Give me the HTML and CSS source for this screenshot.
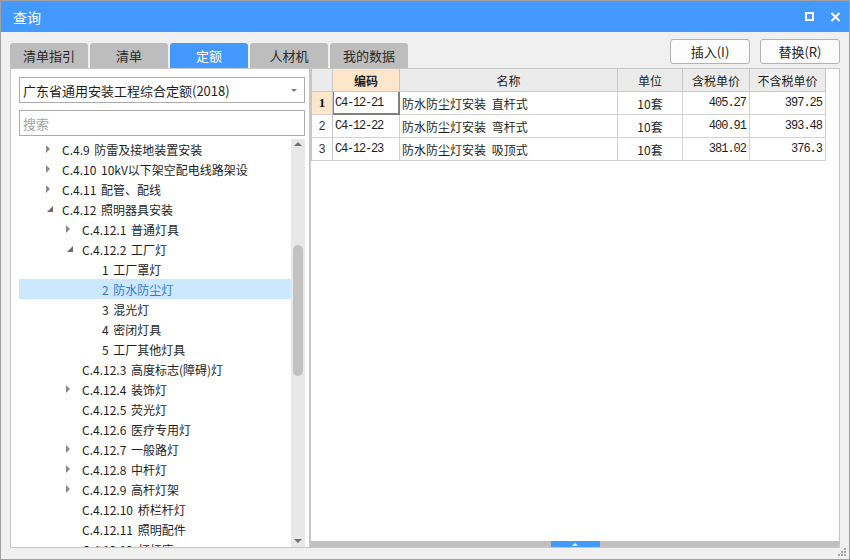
FILE: index.html
```html
<!DOCTYPE html>
<html lang="zh">
<head>
<meta charset="utf-8">
<title>查询</title>
<link rel="stylesheet" href="styles.css">
</head>
<body>
<div class="window">
  <div class="titlebar">
    <span class="title">查询</span>
    <div class="win-btns">
      <svg width="9" height="9" viewBox="0 0 9 9"><rect x="1" y="1" width="7" height="7" fill="none" stroke="#fff" stroke-width="2"/></svg>
      <svg width="11" height="10" viewBox="0 0 11 10"><path d="M1.5 1L9.5 9M9.5 1L1.5 9" stroke="#fff" stroke-width="2" fill="none"/></svg>
    </div>
  </div>

  <div class="toolbar">
    <div class="tabs">
      <div class="tab">清单指引</div>
      <div class="tab">清单</div>
      <div class="tab active">定额</div>
      <div class="tab">人材机</div>
      <div class="tab">我的数据</div>
    </div>
    <div class="actions">
      <div class="btn">插入(I)</div>
      <div class="btn">替换(R)</div>
    </div>
  </div>

  <div class="main">
    <div class="left">
      <div class="select">
        <span class="select-text">广东省通用安装工程综合定额(2018)</span>
        <svg class="caret" width="6" height="3" viewBox="0 0 6 3"><path d="M0 0H6L3 3Z" fill="#7a7a7a"/></svg>
      </div>
      <div class="search">搜索</div>
      <div class="tree-wrap">
        <div class="tree">
          <div class="row l1"><span class="tog"><svg width="5" height="8" viewBox="0 0 5 8"><path d="M0 0L4 4L0 8Z" fill="#8a8a8a"/></svg></span><span>C.4.9 防雷及接地装置安装</span></div>
          <div class="row l1"><span class="tog"><svg width="5" height="8" viewBox="0 0 5 8"><path d="M0 0L4 4L0 8Z" fill="#8a8a8a"/></svg></span><span>C.4.10 10kV以下架空配电线路架设</span></div>
          <div class="row l1"><span class="tog"><svg width="5" height="8" viewBox="0 0 5 8"><path d="M0 0L4 4L0 8Z" fill="#8a8a8a"/></svg></span><span>C.4.11 配管、配线</span></div>
          <div class="row l1"><span class="tog"><svg class="exp" width="6" height="6" viewBox="0 0 6 6"><path d="M6 0V6H0Z" fill="#6a6a6a"/></svg></span><span>C.4.12 照明器具安装</span></div>
          <div class="row l2"><span class="tog"><svg width="5" height="8" viewBox="0 0 5 8"><path d="M0 0L4 4L0 8Z" fill="#8a8a8a"/></svg></span><span>C.4.12.1 普通灯具</span></div>
          <div class="row l2"><span class="tog"><svg class="exp" width="6" height="6" viewBox="0 0 6 6"><path d="M6 0V6H0Z" fill="#6a6a6a"/></svg></span><span>C.4.12.2 工厂灯</span></div>
          <div class="row l3"><span class="tog"></span><span>1 工厂罩灯</span></div>
          <div class="row l3 sel"><span class="tog"></span><span>2 防水防尘灯</span></div>
          <div class="row l3"><span class="tog"></span><span>3 混光灯</span></div>
          <div class="row l3"><span class="tog"></span><span>4 密闭灯具</span></div>
          <div class="row l3"><span class="tog"></span><span>5 工厂其他灯具</span></div>
          <div class="row l2"><span class="tog"></span><span>C.4.12.3 高度标志(障碍)灯</span></div>
          <div class="row l2"><span class="tog"><svg width="5" height="8" viewBox="0 0 5 8"><path d="M0 0L4 4L0 8Z" fill="#8a8a8a"/></svg></span><span>C.4.12.4 装饰灯</span></div>
          <div class="row l2"><span class="tog"></span><span>C.4.12.5 荧光灯</span></div>
          <div class="row l2"><span class="tog"></span><span>C.4.12.6 医疗专用灯</span></div>
          <div class="row l2"><span class="tog"><svg width="5" height="8" viewBox="0 0 5 8"><path d="M0 0L4 4L0 8Z" fill="#8a8a8a"/></svg></span><span>C.4.12.7 一般路灯</span></div>
          <div class="row l2"><span class="tog"><svg width="5" height="8" viewBox="0 0 5 8"><path d="M0 0L4 4L0 8Z" fill="#8a8a8a"/></svg></span><span>C.4.12.8 中杆灯</span></div>
          <div class="row l2"><span class="tog"><svg width="5" height="8" viewBox="0 0 5 8"><path d="M0 0L4 4L0 8Z" fill="#8a8a8a"/></svg></span><span>C.4.12.9 高杆灯架</span></div>
          <div class="row l2"><span class="tog"></span><span>C.4.12.10 桥栏杆灯</span></div>
          <div class="row l2"><span class="tog"></span><span>C.4.12.11 照明配件</span></div>
          <div class="row l2"><span class="tog"></span><span>C.4.12.12 灯杆座</span></div>
        </div>
        <div class="vscroll">
          <div class="arrow-up"><svg width="8" height="4" viewBox="0 0 8 4"><path d="M0 4L4 0L8 4Z" fill="#707070"/></svg></div>
          <div class="thumb"></div>
          <div class="spacer"></div>
          <div class="arrow-down"><svg width="8" height="4" viewBox="0 0 8 4"><path d="M0 0L8 0L4 4Z" fill="#707070"/></svg></div>
        </div>
      </div>
    </div>

    <div class="right">
      <div class="grid">
        <div class="th"></div>
        <div class="th hl bold">编码</div>
        <div class="th">名称</div>
        <div class="th">单位</div>
        <div class="th">含税单价</div>
        <div class="th">不含税单价</div>

        <div class="td num hl first">1</div>
        <div class="td code focus">C4-12-21</div>
        <div class="td name">防水防尘灯安装 直杆式</div>
        <div class="td unit">10套</div>
        <div class="td price">405.27</div>
        <div class="td price">397.25</div>

        <div class="td num">2</div>
        <div class="td code">C4-12-22</div>
        <div class="td name">防水防尘灯安装 弯杆式</div>
        <div class="td unit">10套</div>
        <div class="td price">400.91</div>
        <div class="td price">393.48</div>

        <div class="td num">3</div>
        <div class="td code">C4-12-23</div>
        <div class="td name">防水防尘灯安装 吸顶式</div>
        <div class="td unit">10套</div>
        <div class="td price">381.02</div>
        <div class="td price">376.3</div>
      </div>
      <div class="filler"></div>
      <div class="hscroll">
        <div class="hthumb"><svg width="6" height="3" viewBox="0 0 6 3"><path d="M0 3L3 0L6 3Z" fill="#fff"/></svg></div>
      </div>
    </div>
  </div>

  <div class="bottombar">
    <svg width="9" height="9" viewBox="0 0 9 9" fill="#a6a6a6">
      <rect x="6" y="0" width="2" height="2"/>
      <rect x="3" y="3" width="2" height="2"/><rect x="6" y="3" width="2" height="2"/>
      <rect x="0" y="6" width="2" height="2"/><rect x="3" y="6" width="2" height="2"/><rect x="6" y="6" width="2" height="2"/>
    </svg>
  </div>
</div>
</body>
</html>
```

FILE: styles.css
```css
* {
  box-sizing: border-box;
  margin: 0;
  padding: 0;
}

html, body {
  width: 850px;
  height: 560px;
  overflow: hidden;
}

body {
  font-family: "Noto Sans CJK SC", "Microsoft YaHei", sans-serif;
  font-size: 12px;
  color: #1e1e1e;
  background: #ffffff;
}

.window {
  width: 850px;
  height: 560px;
  border: 1px solid #a0a0a0;
  background: #f0f0f0;
  display: flex;
  flex-direction: column;
}

/* Title bar */
.titlebar {
  height: 31px;
  flex: none;
  background: #4499ff;
  color: #ffffff;
  font-size: 14px;
  display: flex;
  align-items: center;
  padding: 0 8px 0 12px;
}

.title {
  flex: 1;
}

.win-btns {
  display: flex;
  align-items: center;
  gap: 16px;
}

.win-btns svg {
  display: block;
}

/* Toolbar with tabs and buttons */
.toolbar {
  height: 36px;
  flex: none;
  display: flex;
  justify-content: space-between;
  padding: 0 9px;
}

.tabs {
  display: flex;
  gap: 2px;
  align-self: flex-end;
}

.tab {
  width: 78px;
  height: 25px;
  background: #bdbdbd;
  color: #2a2a2a;
  border-radius: 3px 3px 0 0;
  font-size: 13px;
  display: flex;
  align-items: center;
  justify-content: center;
}

.tab.active {
  background: #4499ff;
  color: #ffffff;
}

.actions {
  display: flex;
  gap: 10px;
  padding-top: 7px;
}

.btn {
  width: 80px;
  height: 25px;
  border: 1px solid #b2b2b2;
  border-radius: 3px;
  background: #fdfdfd;
  font-size: 13px;
  color: #222;
  display: flex;
  align-items: center;
  justify-content: center;
}

/* Main area */
.main {
  height: 480px;
  flex: none;
  display: flex;
  padding: 0 9px;
}

.left {
  width: 300px;
  background: #ffffff;
  border: 1px solid #c6c6c6;
  display: flex;
  flex-direction: column;
  padding: 8px 4px 0 8px;
}

.select {
  height: 26px;
  flex: none;
  border: 1px solid #ababab;
  display: flex;
  align-items: center;
  padding: 0 7px 0 3px;
  font-size: 13px;
  color: #1e1e1e;
}

.select-text {
  flex: 1;
  white-space: nowrap;
}

.caret {
  display: block;
}

.search {
  height: 26px;
  flex: none;
  margin-top: 7px;
  border: 1px solid #ababab;
  color: #a3a3a3;
  font-size: 13px;
  padding-left: 3px;
  display: flex;
  align-items: center;
}

.tree-wrap {
  flex: 1;
  margin-top: 3px;
  display: flex;
  overflow: hidden;
  min-height: 0;
}

.tree {
  flex: 1;
  overflow: hidden;
}

.row {
  height: 20px;
  display: flex;
  align-items: center;
  white-space: nowrap;
  color: #1e1e1e;
  word-spacing: 2px;
}

.row.l1 { padding-left: 23px; }
.row.l2 { padding-left: 43px; }
.row.l3 { padding-left: 63px; }

.tog {
  width: 20px;
  flex: none;
  display: flex;
  align-items: center;
  padding-left: 4px;
}

.tog svg {
  display: block;
}

.tog svg.exp {
  margin-left: 1px;
}

.row.sel {
  background: #cce8ff;
  color: #2f7bd4;
}

.vscroll {
  width: 14px;
  flex: none;
  background: #e8e8e8;
  display: flex;
  flex-direction: column;
  align-items: center;
}

.arrow-up {
  height: 10px;
  padding-top: 3px;
}

.arrow-up svg,
.arrow-down svg {
  display: block;
}

.thumb {
  width: 10px;
  height: 131px;
  margin-top: 96px;
  border-radius: 5px;
  background: #c2c2c2;
}

.spacer {
  flex: 1;
}

.arrow-down {
  height: 8px;
}

/* Right panel */
.right {
  width: 530px;
  background: #ffffff;
  border: 1px solid #c6c6c6;
  display: flex;
  flex-direction: column;
}

.grid {
  display: grid;
  grid-template-columns: 21px 67px 218px 65px 67px 76px;
  width: 515px;
  border-left: 1px solid #c6c6c6;
}

.th,
.td {
  height: 23px;
  border-right: 1px solid #d2d2d2;
  border-bottom: 1px solid #d2d2d2;
  display: flex;
  align-items: center;
  white-space: nowrap;
  font-size: 12px;
}

.th {
  background: #ebebeb;
  border-color: #c8c8c8;
  justify-content: center;
  color: #1e1e1e;
}

.hl {
  background: #fde6c9;
}

.bold {
  font-weight: bold;
}

.td.num {
  justify-content: center;
  font-family: "Liberation Sans", sans-serif;
  color: #333;
  border-right-color: #c8c8c8;
}

.td.num.first {
  font-family: "Liberation Serif", serif;
  font-weight: bold;
  font-size: 13px;
  color: #111;
}

.td.code {
  font-family: "Liberation Mono", monospace;
  font-size: 12px;
  letter-spacing: -1.2px;
  padding-left: 2px;
}

.td.focus {
  box-shadow: inset 1px 0 0 #3d8ef0, inset -1px -1px 0 #808080;
  border-right-color: #808080;
  border-bottom-color: #808080;
}

.td.name {
  padding-left: 2px;
  word-spacing: 3px;
}

.td.unit {
  justify-content: center;
}

.td.price {
  justify-content: flex-end;
  padding-right: 3px;
  font-family: "Liberation Mono", monospace;
  font-size: 12px;
  letter-spacing: -1px;
}

.filler {
  flex: 1;
}

.hscroll {
  height: 6px;
  flex: none;
  background: #c0c0c0;
  display: flex;
  justify-content: center;
}

.hthumb {
  width: 49px;
  height: 6px;
  background: #4499ff;
  display: flex;
  align-items: center;
  justify-content: center;
}

.hthumb svg {
  display: block;
}

/* Bottom bar */
.bottombar {
  flex: 1;
  display: flex;
  justify-content: flex-end;
  align-items: flex-start;
  padding: 0 2px 0 0;
}

.bottombar svg {
  display: block;
}
```
